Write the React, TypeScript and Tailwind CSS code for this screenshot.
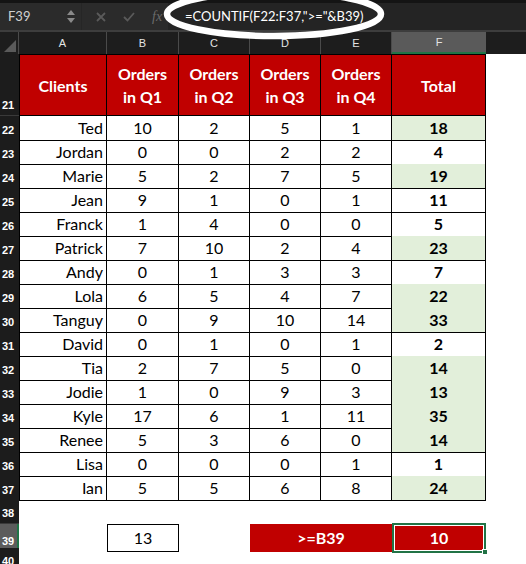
import React from "react";

const rows: [string, number, number, number, number, number][] = [
  ["Ted", 10, 2, 5, 1, 18],
  ["Jordan", 0, 0, 2, 2, 4],
  ["Marie", 5, 2, 7, 5, 19],
  ["Jean", 9, 1, 0, 1, 11],
  ["Franck", 1, 4, 0, 0, 5],
  ["Patrick", 7, 10, 2, 4, 23],
  ["Andy", 0, 1, 3, 3, 7],
  ["Lola", 6, 5, 4, 7, 22],
  ["Tanguy", 0, 9, 10, 14, 33],
  ["David", 0, 1, 0, 1, 2],
  ["Tia", 2, 7, 5, 0, 14],
  ["Jodie", 1, 0, 9, 3, 13],
  ["Kyle", 17, 6, 1, 11, 35],
  ["Renee", 5, 3, 6, 0, 14],
  ["Lisa", 0, 0, 0, 1, 1],
  ["Ian", 5, 5, 6, 8, 24],
];

const gridCols = "grid grid-cols-[19px_88px_72px_71px_71px_71px_94px_1fr]";

function RowLabel({ n, selected }: { n: number; selected?: boolean }) {
  return (
    <div
      className={
        "flex items-end pl-[2px] pb-[1px] text-[11px] font-bold text-white leading-none border-b border-[#3a3a3a] " +
        (selected ? "bg-[#5c5c5c] border-r-2 border-r-[#217346]" : "bg-[#1c1c1c]")
      }
      style={{ fontFamily: "'Liberation Sans', Arial, sans-serif" }}
    >
      <span className="pb-[3px]">{n}</span>
    </div>
  );
}

export default function App() {
  return (
    <div
      className="relative w-[526px] h-[564px] overflow-hidden bg-white"
      style={{ fontFamily: "Lato, 'Open Sans', sans-serif" }}
    >
      {/* Formula bar */}
      <div className="h-[3px] bg-[#141414]" />
      <div className="flex h-[29px] bg-[#2b2b2b] border-b-2 border-[#3d3d3d]">
        <div className="flex items-center w-[82px] pl-[8px] pr-[6px] justify-between border-r border-[#262626]">
          <span className="text-[13px] text-[#d0d0d0]">F39</span>
          <div className="flex flex-col items-center gap-[3px]">
            <svg width="8" height="5" viewBox="0 0 8 5"><path d="M0 5 L4 0 L8 5Z" fill="#8a8a8a" /></svg>
            <svg width="8" height="5" viewBox="0 0 8 5"><path d="M0 0 L4 5 L8 0Z" fill="#8a8a8a" /></svg>
          </div>
        </div>
        <div className="flex items-center gap-[17px] pl-[14px] w-[86px]">
          <svg width="10" height="10" viewBox="0 0 10 10"><path d="M1 1 L9 9 M9 1 L1 9" stroke="#5a5a5a" strokeWidth="1.8" /></svg>
          <svg width="12" height="10" viewBox="0 0 12 10"><path d="M1 5 L4.5 8.5 L11 1" stroke="#5a5a5a" strokeWidth="1.8" fill="none" /></svg>
          <span className="text-[14px] italic text-[#6a6a6a]" style={{ fontFamily: "'Liberation Serif', serif" }}>fx</span>
        </div>
        <div className="flex-1 flex items-center pl-[17px] bg-[#242424]">
          <span className="text-[13px] text-white tracking-[0px]">=COUNTIF(F22:F37,"&gt;="&amp;B39)</span>
        </div>
      </div>

      {/* Column headers */}
      <div className={gridCols + " h-[22px] bg-[#1d1d1d] text-[11px] text-[#e4e4e4]"} style={{ fontFamily: "'Liberation Sans', Arial, sans-serif" }}>
        <div className="relative border-r border-[#4a4a4a]">
          <svg className="absolute right-[2px] bottom-[2px]" width="12" height="12" viewBox="0 0 12 12"><path d="M12 0 L12 12 L0 12Z" fill="#5a5a5a" /></svg>
        </div>
        {["A", "B", "C", "D", "E"].map((c) => (
          <div key={c} className="flex items-center justify-center border-r border-[#4a4a4a]">{c}</div>
        ))}
        <div className="flex items-center justify-center bg-[#5a5a5a] border-b-2 border-[#217346]">F</div>
        <div />
      </div>

      {/* Row 21 header */}
      <div className={gridCols + " h-[62px]"}>
        <RowLabel n={21} />
        {["Clients", "Orders in Q1", "Orders in Q2", "Orders in Q3", "Orders in Q4", "Total"].map((h, i) => (
          <div
            key={h}
            className={
              "flex items-center justify-center text-center bg-[#c00000] text-white font-bold text-[16px] leading-[23px] border-t border-r border-b border-black px-[6px] " +
              (i === 0 ? "border-l" : "")
            }
          >
            {h}
          </div>
        ))}
        <div />
      </div>

      {/* Data rows */}
      {rows.map((r, idx) => {
        const green = r[5] >= 13;
        return (
          <div key={r[0]} className={gridCols + " h-[24px] text-[16px] text-black"}>
            <RowLabel n={22 + idx} />
            <div className="flex items-center justify-end pr-[3px] border-l border-r border-b border-black">{r[0]}</div>
            {[r[1], r[2], r[3], r[4]].map((v, j) => (
              <div key={j} className="flex items-center justify-center border-r border-b border-black">{v}</div>
            ))}
            <div className={"flex items-center justify-center font-bold border-r border-b border-black " + (green ? "bg-[#e2efda]" : "")}>{r[5]}</div>
            <div />
          </div>
        );
      })}

      {/* Row 38 */}
      <div className={gridCols + " h-[24px]"}>
        <RowLabel n={38} />
      </div>

      {/* Row 39 */}
      <div className={gridCols + " h-[24px] text-[16px]"}>
        <RowLabel n={39} selected />
        <div />
        <div className="flex items-center justify-center border border-black text-black">13</div>
        <div />
        <div className="col-span-2 flex items-center justify-center bg-[#c00000] text-white font-bold">&gt;=B39</div>
        <div className="relative -mt-[1px] -mb-[1px] border-2 border-[#217346]">
          <div className="h-full flex items-center justify-center bg-[#c00000] border border-white text-white font-bold">10</div>
          <span className="absolute -right-[4px] -bottom-[4px] w-[6px] h-[6px] bg-[#217346] border border-white" />
        </div>
        <div />
      </div>

      {/* Row 40 */}
      <div className={gridCols + " h-[24px]"}>
        <RowLabel n={40} />
      </div>

      {/* Annotation ellipse */}
      <svg className="absolute left-0 top-0 pointer-events-none" width="526" height="50" viewBox="0 0 526 50">
        <ellipse cx="274" cy="14" rx="107" ry="22" fill="none" stroke="white" strokeWidth="6.5" />
      </svg>
    </div>
  );
}
